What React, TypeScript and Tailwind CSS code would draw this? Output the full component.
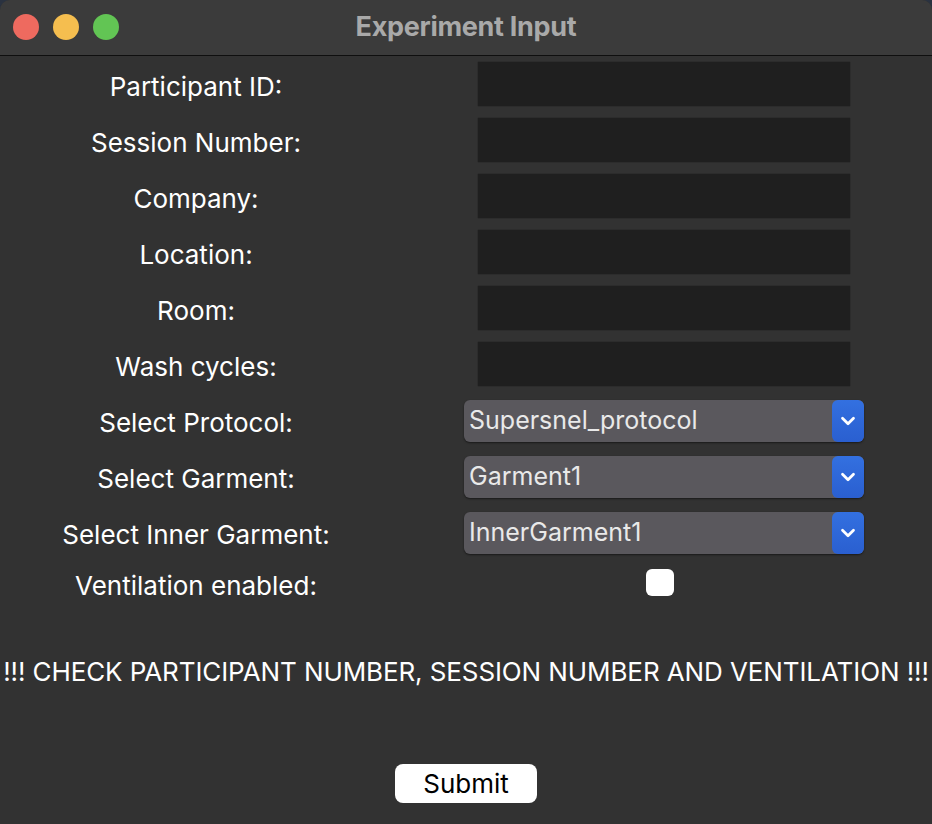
import { ChevronDown } from 'lucide-react';

const textFields = ['Participant ID:', 'Session Number:', 'Company:', 'Location:', 'Room:', 'Wash cycles:'];

const selects = [
  { label: 'Select Protocol:', value: 'Supersnel_protocol' },
  { label: 'Select Garment:', value: 'Garment1' },
  { label: 'Select Inner Garment:', value: 'InnerGarment1' },
];

function Label({ children }: { children: string }) {
  return (
    <div className="flex items-center justify-center pt-[4px] text-[26px] text-white">{children}</div>
  );
}

export default function App() {
  return (
    <div
      className="w-[932px] h-[824px] overflow-hidden bg-[#2a3240]"
      style={{ fontFamily: 'Inter, "Liberation Sans", sans-serif' }}
    >
      <div className="h-[834px] rounded-[10px] overflow-hidden bg-[#323232] flex flex-col">
        {/* Title bar */}
        <div className="relative h-[56px] shrink-0 bg-[#3b3b3b] border-b border-[#0f0f0f] flex items-center justify-center">
          <div className="absolute left-[13px] top-[14px] flex gap-[14px]">
            <span className="block w-[26px] h-[26px] rounded-full bg-[#ee6a5f]" />
            <span className="block w-[26px] h-[26px] rounded-full bg-[#f5be4f]" />
            <span className="block w-[26px] h-[26px] rounded-full bg-[#62c554]" />
          </div>
          <span className="text-[27px] font-bold text-[#a9a9a9] tracking-[-0.3px]">Experiment Input</span>
        </div>

        {/* Form */}
        <div className="grid grid-cols-[392px_540px] auto-rows-[44px] gap-y-[12px] pt-[6px]">
          {textFields.map((label) => (
            <div key={label} className="contents">
              <Label>{label}</Label>
              <div className="flex items-center justify-center pl-[4px]">
                <div className="w-[372px] h-[44px] bg-[#1f1f1f] shadow-[0_0_1px_rgba(0,0,0,0.6)]" />
              </div>
            </div>
          ))}

          {selects.map((s) => (
            <div key={s.label} className="contents">
              <Label>{s.label}</Label>
              <div className="flex items-center justify-center pl-[4px] pt-[2px]">
                <div className="w-[400px] h-[42px] rounded-[6px] bg-[#5a585d] shadow-[0_1px_2px_rgba(0,0,0,0.5)] flex items-center justify-between">
                  <span className="pl-[5px] text-[25px] text-[#e9e9e9]">{s.value}</span>
                  <span className="w-[32px] h-[42px] rounded-[6px] bg-gradient-to-b from-[#3370e0] to-[#2a5fd0] flex items-center justify-center">
                    <ChevronDown size={22} strokeWidth={3} color="white" />
                  </span>
                </div>
              </div>
            </div>
          ))}

          <div className="flex items-center justify-center pb-[5px] text-[26px] text-white">Ventilation enabled:</div>
          <div className="flex items-start justify-center pt-[3px]">
            <div className="ml-[-4px] w-[28px] h-[27px] rounded-[6px] bg-white" />
          </div>
        </div>

        <div className="mt-[42px] text-center text-[26px] text-white tracking-[-0.1px] whitespace-nowrap">
          !!! CHECK PARTICIPANT NUMBER, SESSION NUMBER AND VENTILATION !!!
        </div>

        <div className="mt-[73px] flex justify-center">
          <button className="w-[142px] h-[39px] rounded-[8px] bg-white text-[26px] text-black">Submit</button>
        </div>
      </div>
    </div>
  );
}
